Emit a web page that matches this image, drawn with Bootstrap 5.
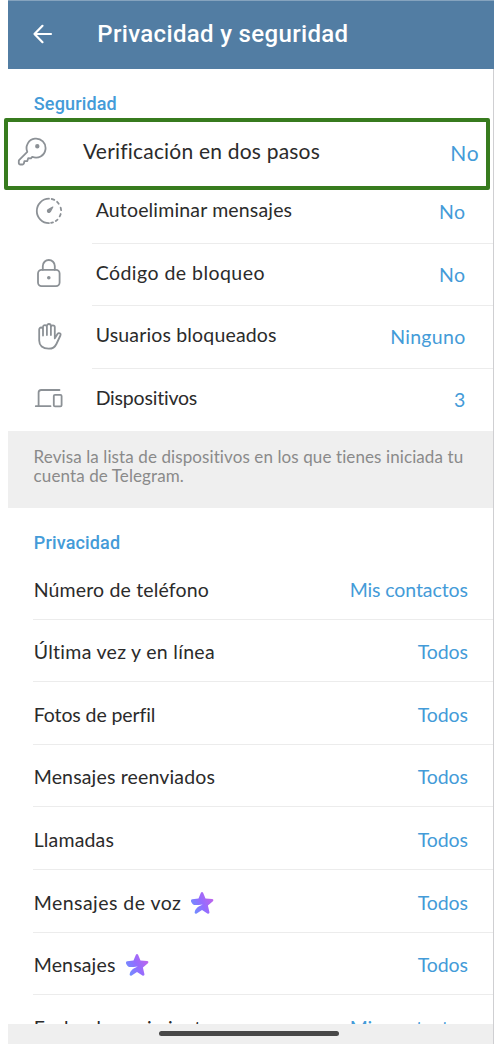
<!DOCTYPE html>
<html lang="es">
<head>
<meta charset="utf-8">
<meta name="viewport" content="width=device-width, initial-scale=1">
<title>Privacidad y seguridad</title>
<link href="https://cdn.jsdelivr.net/npm/bootstrap@5.3.0/dist/css/bootstrap.min.css" rel="stylesheet">
<style>
body{background:#fff;font-family:Lato,"Liberation Sans",sans-serif;color:#2b2b2b;font-size:19.5px;line-height:24px;letter-spacing:.16px;overflow:hidden}
.phone{width:494px;height:1044px}
.topbar{height:69px;margin-left:8px;background:#527da3;border-top:1px solid #85a3be;color:#fff;font:500 24px/30px Roboto,sans-serif;letter-spacing:.34px;padding:0 0 2px 24px}
.topbar h1{font:inherit;margin:0 0 0 43.3px}
.screen{min-height:0;border-right:1px solid #cfcfd2;padding-left:8px}
.heading{font:500 18px/24px Roboto,sans-serif;letter-spacing:.15px;color:#449bd8;margin:0;padding:22.5px 0 0 25.8px;height:49px}
.h-second{padding-top:23.3px}
.boxed{margin:0 3px 0 -4px;height:72px;border:4px solid #377b1e;border-radius:2px;background:#fff;font-size:21px;letter-spacing:.2px;padding:0 6.5px 0 8.5px}
.boxed .lbl{padding-top:17px;margin-left:36.5px}
.boxed .val{padding-top:19px;letter-spacing:.8px}
.boxed .icon{margin-top:14.5px}
.val{color:#449bd8}
.icon{width:30px;height:30px;flex:none;fill:none;stroke:#8c9196;stroke-width:1.8;stroke-linecap:round;stroke-linejoin:round}
.opt{height:62.6px;padding-left:26px}
.opt .icon{margin-top:14.5px}
.opt .body-line{margin-left:28px;padding:17.2px 27.5px 0 3.7px}
.opt .val{padding-top:2px}
.opt:first-child{margin-top:-9px}
.opt:last-child{height:62.2px}
.line{border-bottom:1.3px solid #ececec}
.note{height:77px;background:#efefef;color:#8a8a8a;font-size:17px;line-height:19px;letter-spacing:.1px;padding:15.6px 0 0 25.6px}
.priv{height:62.6px;margin-left:25px;padding:20.6px 25.2px 0 .7px}
.star{width:24px;height:24px;margin-left:9px;vertical-align:top}
.sp-n{letter-spacing:-.2px}.sp-0{letter-spacing:-.1px}.sp-m{letter-spacing:.3px}.sp-l{letter-spacing:.46px}
.navbar-strip{height:20px;margin-left:8px;background:#efefef;border-right:1px solid #cfcfd2}
.pill{width:180px;height:5px;background:#484848;border-radius:3px;margin:0 3px 1px 0}
</style>
</head>
<body>
<div class="phone d-flex flex-column">
  <header class="topbar d-flex align-items-center flex-shrink-0">
    <svg width="22" height="22" viewBox="0 0 22 22" fill="none" stroke="#fff" stroke-width="2.2" stroke-linecap="round" stroke-linejoin="round"><path d="M19 11H2.500M10.500 2.800 2.500 11l8 8.200"/></svg>
    <h1>Privacidad y seguridad</h1>
  </header>

  <main class="screen flex-grow-1 overflow-hidden">
    <h2 class="heading">Seguridad</h2>
    <div class="boxed d-flex position-relative">
      <svg class="icon" viewBox="0 0 30 30"><path d="M10.300 14.800A9.500 9.500 0 1 1 15.200 19.800l-1.300 1.500-2.700-.1-.9 2.800-2.900.2-.6 2.500a1.500 1.500 0 0 1-1.300.8H3.300a1.500 1.500 0 0 1-1.500-1.500v-2c0-.5.200-.9.500-1.200z"/><circle cx="20.300" cy="9.200" r="1.300" fill="#8c9196"/></svg>
      <span class="lbl">Verificación en dos pasos</span>
      <span class="val ms-auto">No</span>
    </div>
    <div>
      <div class="opt d-flex">
        <svg class="icon" viewBox="0 0 30 30"><path d="M15 2.700A12.200 12.200 0 0 0 15 27.100"/><path d="M17.700 3a12.200 12.200 0 0 1 2.600.9M23.100 5.800a12.200 12.200 0 0 1 1.600 1.900M26.600 11.600a12.200 12.200 0 0 1 .5 2.600M26.700 18a12.200 12.200 0 0 1-1 2.400M23.500 23.600a12.200 12.200 0 0 1-1.700 1.400M19 26.400a12.200 12.200 0 0 1-1.900.5"/><path d="M18.800 11l-4.500 2.600a1.500 1.500 0 1 0 2 2z" fill="#8c9196" stroke-width="1.200"/></svg>
        <div class="body-line line flex-grow-1 d-flex justify-content-between"><span>Autoeliminar mensajes</span><span class="val sp-l">No</span></div>
      </div>
      <div class="opt d-flex">
        <svg class="icon" viewBox="0 0 30 30"><rect x="4" y="11.800" width="21.600" height="16.400" rx="3.600"/><path d="M8.800 11.800V8a6 6 0 0 1 12 0v3.800"/><circle cx="14.800" cy="19.800" r="1.100" fill="#8c9196" stroke-width="1.400"/></svg>
        <div class="body-line line flex-grow-1 d-flex justify-content-between"><span class="sp-l">Código de bloqueo</span><span class="val sp-l">No</span></div>
      </div>
      <div class="opt d-flex">
        <svg class="icon" viewBox="0 0 30 30"><path d="M5.200 19.500V8.400a1.900 1.900 0 0 1 3.800 0V6a1.950 1.950 0 0 1 3.900 0V5a2 2 0 0 1 4 0v1.300a1.950 1.950 0 0 1 3.900 0V17.400l2.500-4.200c.7-1.200 2.100-1.400 2.900-.7.600.5.600 1.200.2 2l-4 8.500c-1.300 2.900-4 4.700-7.700 4.700-6 0-9.500-3.200-9.500-8.200zM9 8.400V14.500M12.900 6V14M16.900 6.300V14"/></svg>
        <div class="body-line line flex-grow-1 d-flex justify-content-between"><span>Usuarios bloqueados</span><span class="val sp-m">Ninguno</span></div>
      </div>
      <div class="opt d-flex">
        <svg class="icon" viewBox="0 0 30 30"><path d="M25.500 7H7.200A2.600 2.600 0 0 0 4.600 9.600V23M1.800 23.200H16.500"/><rect x="19.800" y="11.800" width="7.800" height="11.600" rx="1.200"/></svg>
        <div class="body-line flex-grow-1 d-flex justify-content-between"><span class="sp-n">Dispositivos</span><span class="val">3</span></div>
      </div>
    </div>
    <p class="note mb-0">Revisa la lista de dispositivos en los que tienes iniciada tu<br>cuenta de Telegram.</p>

    <h2 class="heading h-second">Privacidad</h2>
    <div>
      <div class="priv line d-flex justify-content-between"><span>Número de teléfono</span><span class="val sp-0">Mis contactos</span></div>
      <div class="priv line d-flex justify-content-between"><span class="sp-m">Última vez y en línea</span><span class="val sp-0">Todos</span></div>
      <div class="priv line d-flex justify-content-between"><span class="sp-0">Fotos de perfil</span><span class="val sp-0">Todos</span></div>
      <div class="priv line d-flex justify-content-between"><span>Mensajes reenviados</span><span class="val sp-0">Todos</span></div>
      <div class="priv line d-flex justify-content-between"><span>Llamadas</span><span class="val sp-0">Todos</span></div>
      <div class="priv line d-flex justify-content-between"><span class="sp-l">Mensajes de voz<svg class="star" viewBox="0 0 24 24"><defs><linearGradient id="g" x1="0" y1=".8" x2="1" y2=".3"><stop offset="0" stop-color="#6b93ff"/><stop offset=".5" stop-color="#936dff"/><stop offset="1" stop-color="#c264ea"/></linearGradient></defs><path id="st" fill="url(#g)" d="M10.900 1.700c.5-1.100 1.700-1.100 2.200 0l2.400 5.900 6.600.5c1.300.1 1.700 1.300.8 2.100l-5 4.300 1.500 6.500c.3 1.300-.9 2.100-2 1.400L12 19l-5.300 3.400c-1.200.7-2.300-.1-2-1.400.7-3.300 2.500-5.200 8-7.600-3.300.4-5.500.8-7.300.7-1.700 0-3-1-4-2.900C.6 9.700 1 8.300 2.200 8.200l6.300-.7z"/></svg></span><span class="val sp-0">Todos</span></div>
      <div class="priv line d-flex justify-content-between"><span>Mensajes<svg class="star" viewBox="0 0 24 24"><use href="#st"/></svg></span><span class="val sp-0">Todos</span></div>
      <div class="priv d-flex justify-content-between"><span>Fecha de nacimiento</span><span class="val sp-0">Mis contactos</span></div>
    </div>
  </main>

  <div class="navbar-strip d-flex flex-shrink-0 justify-content-center align-items-center"><div class="pill"></div></div>
</div>
<script src="https://cdn.jsdelivr.net/npm/bootstrap@5.3.0/dist/js/bootstrap.bundle.min.js"></script>
</body>
</html>
